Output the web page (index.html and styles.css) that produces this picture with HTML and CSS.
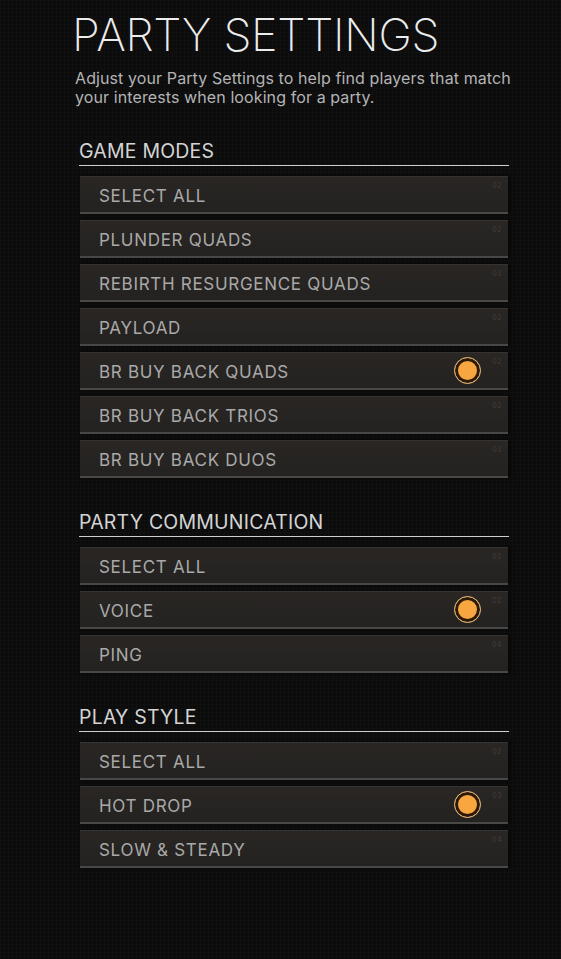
FILE: index.html
```html
<!DOCTYPE html>
<html>
<head>
<meta charset="utf-8">
<link rel="stylesheet" href="styles.css">
</head>
<body>
<main class="page">
  <h1 class="title">PARTY SETTINGS</h1>
  <p class="subtitle">Adjust your Party Settings to help find players that match your interests when looking for a party.</p>

  <section class="section">
    <h2 class="section-head">GAME MODES</h2>
    <ul class="rows">
      <li class="row"><span class="label">SELECT ALL</span><span class="num">02</span></li>
      <li class="row"><span class="label">PLUNDER QUADS</span><span class="num">02</span></li>
      <li class="row"><span class="label">REBIRTH RESURGENCE QUADS</span><span class="num">03</span></li>
      <li class="row"><span class="label">PAYLOAD</span><span class="num">02</span></li>
      <li class="row"><span class="label">BR BUY BACK QUADS</span><span class="radio"></span><span class="num">02</span></li>
      <li class="row"><span class="label">BR BUY BACK TRIOS</span><span class="num">02</span></li>
      <li class="row"><span class="label">BR BUY BACK DUOS</span><span class="num">03</span></li>
    </ul>
  </section>

  <section class="section">
    <h2 class="section-head">PARTY COMMUNICATION</h2>
    <ul class="rows">
      <li class="row"><span class="label">SELECT ALL</span><span class="num">02</span></li>
      <li class="row"><span class="label">VOICE</span><span class="radio"></span><span class="num">02</span></li>
      <li class="row"><span class="label">PING</span><span class="num">04</span></li>
    </ul>
  </section>

  <section class="section">
    <h2 class="section-head">PLAY STYLE</h2>
    <ul class="rows">
      <li class="row"><span class="label">SELECT ALL</span><span class="num">02</span></li>
      <li class="row"><span class="label">HOT DROP</span><span class="radio"></span><span class="num">03</span></li>
      <li class="row"><span class="label">SLOW &amp; STEADY</span><span class="num">04</span></li>
    </ul>
  </section>
</main>
</body>
</html>
```
FILE: styles.css
```css
html, body {
  margin: 0;
  padding: 0;
  background: #0c0c0d;
  height: 100%;
}
body {
  font-family: Inter, "Liberation Sans", sans-serif;
  background-color: #0c0c0d;
  background-image:
    linear-gradient(rgba(255,255,255,0.012) 1px, transparent 1px),
    linear-gradient(90deg, rgba(255,255,255,0.012) 1px, transparent 1px);
  background-size: 4px 4px;
}
.page {
  padding: 12px 0 0 72px;
  width: 440px;
}
.title {
  margin: 0;
  font-size: 45px;
  line-height: 46px;
  font-weight: 200;
  color: #ececec;
  letter-spacing: -0.3px;
}
.subtitle {
  margin: 11px 0 0 3px;
  font-size: 16px;
  line-height: 19px;
  color: #b4b4b4;
  width: 450px;
  letter-spacing: 0.1px;
}
.section {
  margin: 33px 0 0 7px;
}
.section + .section {
  margin-top: 33px;
}
.section-head {
  margin: 0;
  font-size: 19.5px;
  line-height: 22px;
  font-weight: 400;
  color: #d4d4d4;
  padding-bottom: 3px;
  border-bottom: 1px solid #cfcfcf;
  width: 430px;
  letter-spacing: 0.2px;
}
.rows {
  list-style: none;
  margin: 10px 0 0 1px;
  padding: 0;
  display: flex;
  flex-direction: column;
  gap: 6px;
}
.row {
  position: relative;
  box-sizing: border-box;
  width: 428px;
  height: 38px;
  background: linear-gradient(180deg, #292624 0%, #242220 100%);
  border-top: 1px solid #363432;
  border-bottom: 2px solid #4a4846;
  display: flex;
  align-items: center;
  padding: 2px 0 0 19px;
  box-shadow: 2px 0 3px rgba(0,0,0,0.6);
}
.label {
  font-size: 17px;
  color: #a9a9a9;
  letter-spacing: 0.7px;
  flex: 1;
}
.num {
  position: absolute;
  top: 4px;
  right: 6px;
  font-size: 7px;
  color: #403e3c;
  letter-spacing: 0.5px;
}
.radio {
  box-sizing: border-box;
  width: 27px;
  height: 27px;
  margin-top: -2px;
  border-radius: 50%;
  border: 1px solid #d9b27d;
  background: #f7a640;
  box-shadow: inset 0 0 0 3px #2b1a08;
  margin-right: 27px;
  flex: none;
}
```
